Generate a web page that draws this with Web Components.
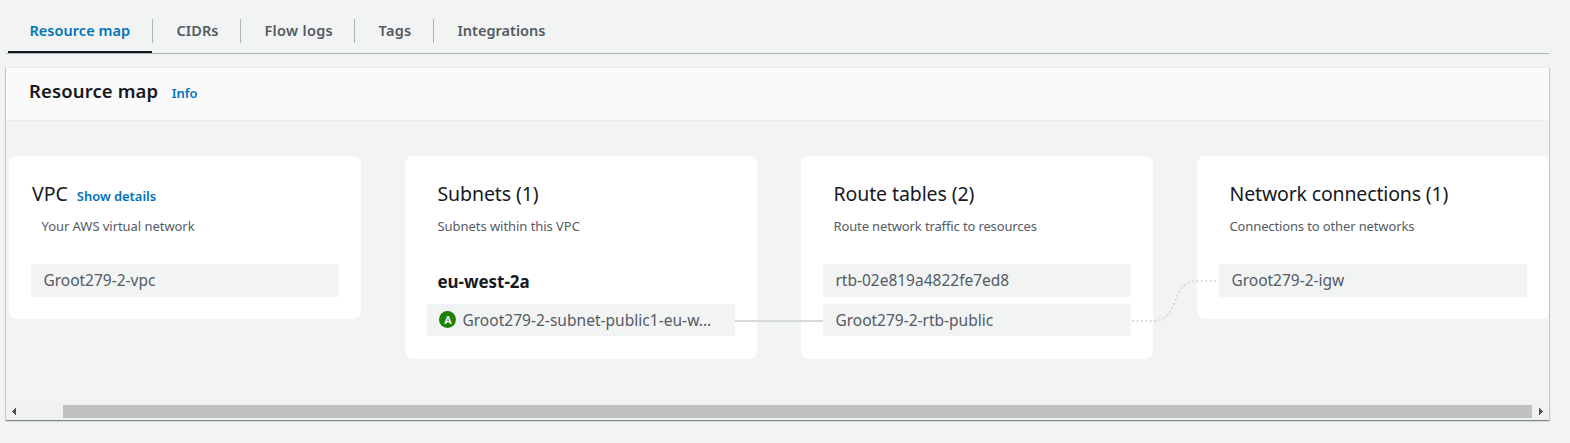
<!DOCTYPE html>
<html lang="en">
<head>
<meta charset="utf-8">
<title>Resource map</title>
<style>
html { background: #f2f3f3; }
body { margin: 0; background: #f2f3f3; font-family: "Noto Sans", "Open Sans", sans-serif; color: #16191f; }
</style>
</head>
<body>
<vpc-page></vpc-page>
<script>
const define = (name, html) => {
  const template = document.createElement('template');
  template.innerHTML = html;
  customElements.define(name, class extends HTMLElement {
    constructor() {
      super();
      this.attachShadow({ mode: 'open' }).append(template.content.cloneNode(true));
    }
  });
};

define('tab-item', `
<style>
:host { display: block; position: relative; box-sizing: border-box; height: 24px; padding-left: 23.5px; border-right: 1px solid #aab7b8;
  font-size: 14.5px; line-height: 23px; font-weight: 600; color: #545b64; white-space: nowrap; }
:host([active]) { color: #0073bb; padding-left: 21.5px; }
:host([active])::after { content: ""; position: absolute; left: 0; right: 0; top: 32px; height: 2px; background: #16191f; }
:host([last]) { border-right: 0; }
</style><slot></slot>`);

define('tab-bar', `
<style>
:host { display: flex; box-sizing: border-box; height: 35px; padding-left: 2px; border-bottom: 1px solid #aab7b8; }
</style><slot></slot>`);

define('info-link', `
<style>
:host { display: inline; font-size: 13px; font-weight: 600; color: #0073bb; letter-spacing: -.05px; }
</style><slot></slot>`);

define('map-panel', `
<style>
:host { display: flex; flex-direction: column; box-sizing: border-box; height: 353px; border-top: 1px solid #eaeded;
  box-shadow: 0 1px 1px 0 rgba(0,28,36,.3), 1px 1px 1px 0 rgba(0,28,36,.15), -1px 1px 1px 0 rgba(0,28,36,.15); background: #f2f3f3; }
header { display: flex; align-items: baseline; box-sizing: border-box; height: 53px; padding: 9px 23px 0; gap: 13.5px;
  background: #fafafa; border-bottom: 1px solid #eaeded; }
h2 { margin: 0; font-size: 18.5px; line-height: 28px; font-weight: 600; letter-spacing: .12px; }
main { flex: 1; }
</style>
<header><h2><slot name="title"></slot></h2><slot name="info"></slot></header>
<main><slot></slot></main>
<scroll-bar></scroll-bar>`);

define('scroll-bar', `
<style>
:host { display: flex; align-items: center; height: 17px; background: #f1f1f1; }
svg { width: 17px; height: 17px; flex: none; display: block; }
i { margin-left: 40px; width: 1469px; height: 13px; background: #c1c1c1; }
</style>
<svg viewBox="0 0 17 17" shape-rendering="crispEdges" fill="#505050"><path d="M10 5v7L6 8.5z"/></svg>
<i></i>
<svg viewBox="0 0 17 17" shape-rendering="crispEdges" fill="#505050"><path d="M7 5v7l4-3.5z"/></svg>`);

define('map-canvas', `
<style>
:host { display: flex; position: relative; align-items: flex-start; gap: 44px; padding: 35px 0 0 3px; }
svg { position: absolute; left: 0; top: 0; width: 1543px; height: 280px; pointer-events: none; }
</style>
<slot></slot>
<svg viewBox="6 121 1543 280" fill="none" stroke="#d5dbdb" stroke-width="2">
  <path d="M735 321H823"/>
  <path d="M1132 321H1153C1181 321 1169 281 1197 281H1219" stroke-dasharray="2 2.45"/>
</svg>`);

define('map-card', `
<style>
:host { display: block; box-sizing: border-box; width: 352px; flex: none; padding: 24px 22px 22px; border-radius: 8px; background: #fff; }
:host([tall]) { padding-bottom: 23px; }
h3 { display: flex; align-items: baseline; gap: 9px; margin: 0; height: 28px; padding-left: var(--title-x, 10.5px); font-size: 19.5px; line-height: 28px; font-weight: 400; white-space: nowrap; }
p { margin: 8px 0 0; padding-left: 10.5px; height: 20px; font-size: 13px; line-height: 20px; color: #545b64; white-space: nowrap; letter-spacing: var(--sub-ls, -.05px); }
section { display: grid; gap: 7px; margin-top: 28px; }
</style>
<h3><span><slot name="title"></slot></span><slot name="action"></slot></h3>
<p><slot name="subtitle"></slot></p>
<section><slot></slot></section>`);

define('zone-name', `
<style>
:host { display: block; height: 33px; padding-left: 10.5px; font-size: 17px; line-height: 35px; font-weight: 700; letter-spacing: -.05px; }
</style><slot></slot>`);

define('map-item', `
<style>
:host { display: flex; align-items: center; box-sizing: border-box; height: 33px; padding: 0 12.4px 1px; border-radius: 2px;
  background: #f2f3f3; color: #545b64; font-size: 15.5px; line-height: 22px; white-space: nowrap; }
:host([short]) { height: 32px; padding-bottom: 0; }
</style><slot name="badge"></slot><slot></slot>`);

define('az-badge', `
<style>
:host { display: grid; place-items: center; width: 17px; height: 17px; margin: -1px 6px 0 0; border-radius: 50%; background: #1d8102;
  color: #fff; font-size: 11px; line-height: 17px; font-weight: 600; letter-spacing: 0; }
</style><slot></slot>`);

define('vpc-page', `
<style>
:host { display: block; box-sizing: border-box; width: 1549px; height: 443px; padding: 19px 0 0 6px; }
map-panel { margin-top: 13px; }
</style>
<tab-bar>
  <tab-item active style="width:145px;letter-spacing:.03px">Resource map</tab-item>
  <tab-item style="width:88px;letter-spacing:.05px">CIDRs</tab-item>
  <tab-item style="width:114px;letter-spacing:.32px">Flow logs</tab-item>
  <tab-item style="width:79px;letter-spacing:.3px">Tags</tab-item>
  <tab-item last>Integrations</tab-item>
</tab-bar>
<map-panel>
  <span slot="title">Resource map</span>
  <info-link slot="info">Info</info-link>
  <map-canvas>
    <map-card style="--title-x:1px">
      <span slot="title">VPC</span>
      <info-link slot="action">Show details</info-link>
      <span slot="subtitle">Your AWS virtual network</span>
      <map-item>Groot279-2-vpc</map-item>
    </map-card>
    <map-card tall>
      <span slot="title" style="letter-spacing:-.1px">Subnets (1)</span>
      <span slot="subtitle">Subnets within this VPC</span>
      <zone-name>eu-west-2a</zone-name>
      <map-item short style="letter-spacing:.03px"><az-badge slot="badge">A</az-badge>Groot279-2-subnet-public1-eu-w...</map-item>
    </map-card>
    <map-card tall style="--sub-ls:-.13px">
      <span slot="title" style="letter-spacing:-.1px">Route tables (2)</span>
      <span slot="subtitle">Route network traffic to resources</span>
      <map-item>rtb-02e819a4822fe7ed8</map-item>
      <map-item short>Groot279-2-rtb-public</map-item>
    </map-card>
    <map-card style="--sub-ls:-.13px">
      <span slot="title" style="letter-spacing:-.16px">Network connections (1)</span>
      <span slot="subtitle">Connections to other networks</span>
      <map-item>Groot279-2-igw</map-item>
    </map-card>
  </map-canvas>
</map-panel>`);
</script>
</body>
</html>
